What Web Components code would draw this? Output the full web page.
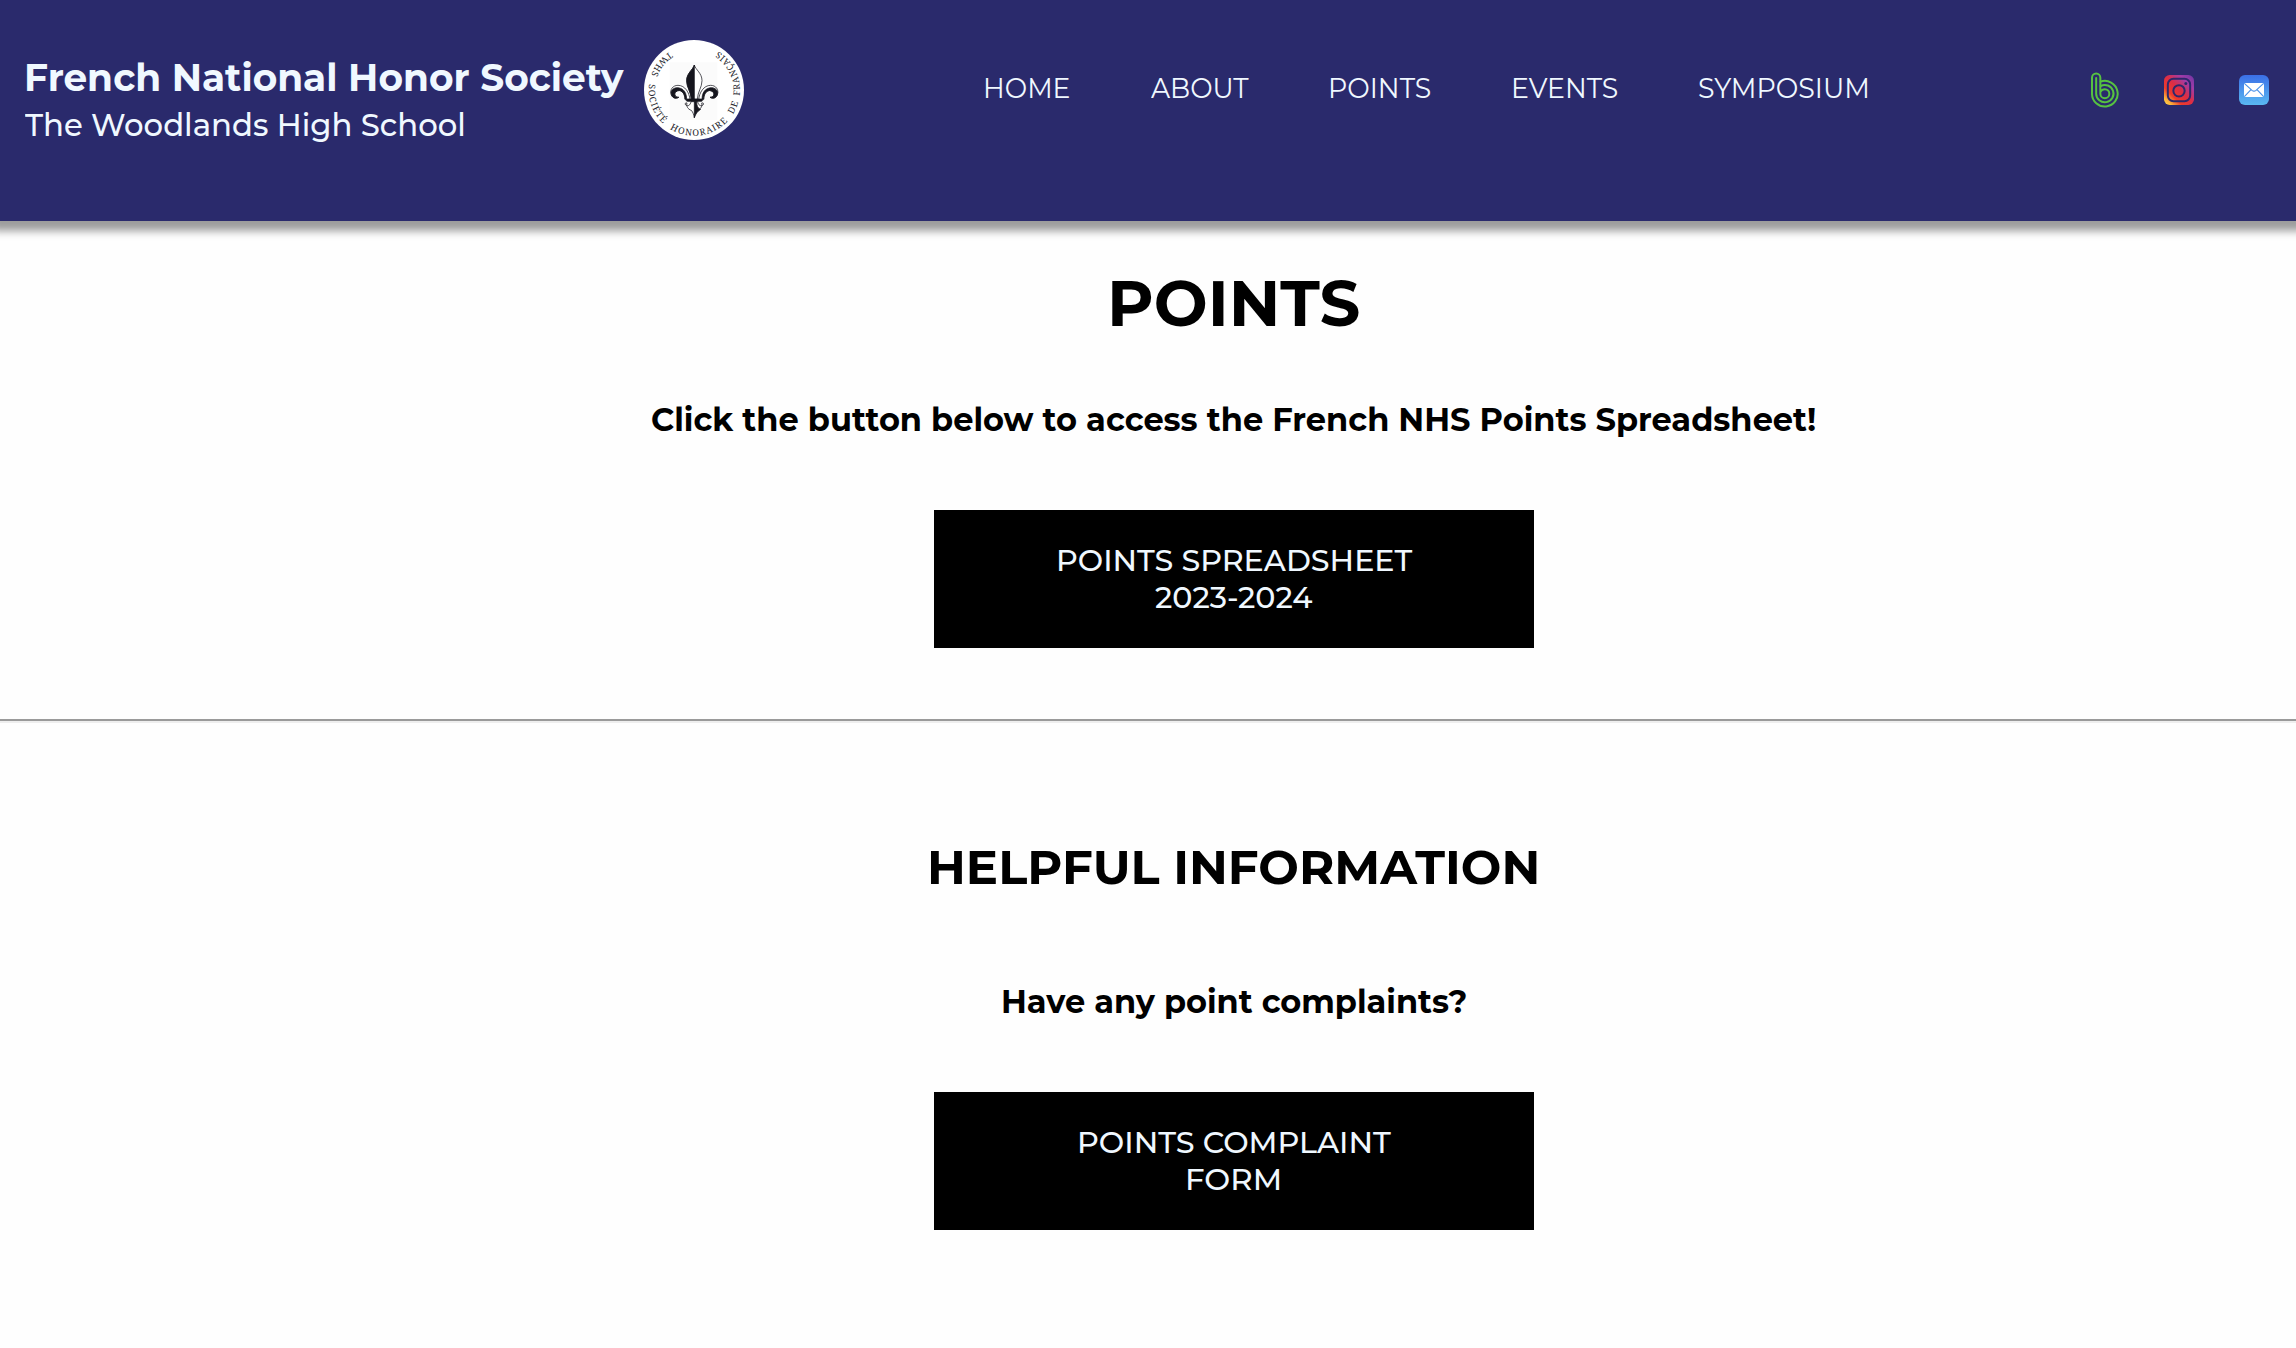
<!DOCTYPE html>
<html lang="en">
<head>
<meta charset="utf-8">
<title>Points</title>
<style>
html,body{margin:0;padding:0;background:#fefefe}
body{font-family:Montserrat,Inter,"Open Sans",sans-serif;color:#000;overflow:hidden;height:1348px}
</style>
</head>
<body>
<points-page></points-page>
<script>
// One line of text whose ink spans the given width. With the "ink" attribute the
// box hugs the ink; otherwise it keeps the font's side bearings.
class FitText extends HTMLElement {
  connectedCallback() {
    const w = +this.getAttribute('w'), size = +this.getAttribute('size');
    const lh = this.getAttribute('lh'), weight = this.getAttribute('weight') || 400;
    const c = document.createElement('canvas').getContext('2d');
    c.font = `${weight} ${size}px Montserrat, Inter, "Open Sans", sans-serif`;
    const m = c.measureText(this.textContent);
    const s = w / (m.actualBoundingBoxLeft + m.actualBoundingBoxRight);
    const ink = this.hasAttribute('ink');
    this.attachShadow({mode: 'open'}).innerHTML = `<style>:host{display:block;flex:none;width:${ink ? w : m.width * s}px;height:${lh}px;line-height:${lh}px;font-size:${size}px;font-weight:${weight};white-space:nowrap}
      span{display:inline-block;transform-origin:0 50%;transform:translateX(${ink ? m.actualBoundingBoxLeft * s : 0}px) scaleX(${s})}</style><span><slot></slot></span>`;
  }
}
customElements.define('fit-text', FitText);

function define(name, html) {
  const t = document.createElement('template');
  t.innerHTML = html;
  customElements.define(name, class extends HTMLElement {
    constructor() { super(); this.attachShadow({mode: 'open'}).append(t.content.cloneNode(true)); }
  });
}

define('society-seal', `<style>:host{display:block;flex:none;width:100px;height:100px}svg{display:block}</style>
<svg width="100" height="100" viewBox="30 29 300 300">
  <defs><path id="ring" d="M106.6 64.3A137 137 0 1 0 248.5 60.4"/></defs>
  <circle cx="180" cy="179" r="150" fill="#fff"/>
  <rect x="107" y="96" width="143" height="173" fill="#fbfbfb"/>
  <text font-family="'Noto Serif','Liberation Serif',serif" font-size="27" letter-spacing="3.2" fill="#25252c"><textPath href="#ring" startOffset="0">TWHS</textPath> <textPath href="#ring" startOffset="118">SOCIÉTÉ</textPath> <textPath href="#ring" startOffset="275">HONORAIRE</textPath> <textPath href="#ring" startOffset="490">DE</textPath> <textPath href="#ring" startOffset="550">FRANÇAIS</textPath></text>
  <g fill="none" stroke="#15151d" stroke-width="2.2" stroke-linejoin="round">
    <path fill="#fff" d="M181 104C185 119 204 128 204 151C204 171 191 184 190 207H172C171 184 158 171 158 151C158 128 177 119 181 104Z"/>
    <path fill="#15151d" d="M181 104V207H172C171 184 158 171 158 151C158 128 177 119 181 104Z"/>
    <path fill="#fff" d="M168 208C166 187 153 165 132 165C116 165 108 178 111 190C113 202 124 207 134 201C122 201 119 190 126 184C139 174 153 187 153 208Z"/>
    <path fill="#15151d" d="M147 178C130 166 112 174 111 187C112 202 124 207 134 201C122 201 119 190 126 184C139 174 153 187 153 206L158 207C158 192 153 183 147 178Z"/>
    <path fill="#fff" d="M194 208C196 187 209 165 230 165C246 165 254 178 251 190C249 202 238 207 228 201C240 201 243 190 236 184C223 174 209 187 209 208Z"/>
    <path fill="#15151d" d="M215 178C232 166 250 174 251 187C250 202 238 207 228 201C240 201 243 190 236 184C223 174 209 187 209 206L204 207C204 192 209 183 215 178Z"/>
    <path fill="#fff" d="M171 214C169 225 162 229 155 224C151 220 155 216 159 218C156 226 161 237 172 240C177 246 180 254 181 262C182 254 185 246 190 240C201 237 206 226 203 218C207 216 211 220 207 224C200 229 193 225 191 214Z"/>
    <path fill="#15151d" d="M181 214V262C185 250 192 242 200 237C191 234 188 225 188 214Z"/>
    <rect x="157" y="206" width="48" height="7" rx="3" fill="#15151d"/>
  </g>
</svg>`);

define('social-links', `<style>:host{display:block;flex:none}svg{display:block}</style>
<svg width="180" height="36" viewBox="60 36 540 108">
  <defs>
    <linearGradient id="mail" x1="0" y1="0" x2="0" y2="1"><stop offset="0" stop-color="#3b6fe6"/><stop offset="1" stop-color="#5ab9f2"/></linearGradient>
    <linearGradient id="ig" x1="0" y1="1" x2="1" y2="0"><stop offset="0" stop-color="#ffdc4e"/><stop offset=".13" stop-color="#fbb33c"/><stop offset=".3" stop-color="#ee3b2b"/><stop offset=".52" stop-color="#dc2d45"/><stop offset=".76" stop-color="#a13ca8"/><stop offset="1" stop-color="#6d35a4"/></linearGradient>
  </defs>
  <g fill="none" stroke="#56c241" stroke-width="6" stroke-linecap="round">
    <path d="M66 101V53A12.5 12.5 0 0 1 91 53V101A13.5 13.5 0 1 0 104.500 87.500C99 87.500 94 91 92 95"/>
    <path d="M66 101A38.500 38.500 0 1 0 92 64.700"/>
    <path d="M78.500 54V101A26 26 0 1 0 92 78"/>
  </g>
  <rect x="282" y="45" width="90" height="90" rx="17" fill="url(#ig)"/>
  <g fill="none" stroke="#2d286c" stroke-width="6"><rect x="293.500" y="56.500" width="67" height="67" rx="17"/><circle cx="327" cy="92.500" r="17"/></g>
  <circle cx="347.500" cy="70.500" r="4.500" fill="#2d286c"/>
  <rect x="507" y="45" width="90" height="90" rx="18" fill="url(#mail)"/>
  <rect x="522" y="69" width="60" height="42" rx="4" fill="#fff"/>
  <path d="M523 70L546 91Q552 96 558 91L581 70M523 110L543 89M581 110L561 89" fill="none" stroke="#4a91e8" stroke-width="3.500"/>
</svg>`);

define('site-header', `<style>
:host{display:flex;align-items:flex-start;position:relative;height:221px;box-sizing:border-box;background:#2a2a6c;color:aliceblue;box-shadow:0 2px 8px 8px #9d9d9d}
.brand{width:619px;padding:54px 0 0 25px;flex:none}
.brand fit-text:first-child{margin-left:2px}
.brand fit-text:last-child{margin-top:1px}
society-seal{margin-top:40px}
nav{display:flex;margin:69px 0 0 242px}
nav fit-text{margin-right:82px}
nav fit-text:first-child{margin-right:81.500px}
nav fit-text:nth-child(3){margin-right:83.700px}
nav fit-text:last-child{margin-right:0}
social-links{margin:72px 26px 0 auto}
</style>
<div class="brand"><fit-text ink w="597.500" size="38.4" lh="48" weight="700">French National Honor Society</fit-text><fit-text ink w="438" size="32" lh="44" weight="500">The Woodlands High School</fit-text></div>
<society-seal></society-seal>
<nav><fit-text ink w="83.300" size="27.2" lh="40">HOME</fit-text><fit-text ink w="98" size="27.2" lh="40">ABOUT</fit-text><fit-text ink w="99.500" size="27.2" lh="40">POINTS</fit-text><fit-text ink w="103.500" size="27.2" lh="40">EVENTS</fit-text><fit-text ink w="168" size="27.2" lh="40">SYMPOSIUM</fit-text></nav>
<social-links></social-links>`);

define('link-button', `<style>:host{display:flex;flex-direction:column;align-items:center;box-sizing:border-box;width:600px;height:138px;padding-top:32px;background:#000;color:aliceblue}</style><slot></slot>`);

define('info-section', `<style>:host{display:flex;flex-direction:column;align-items:center;padding-left:172px}
::slotted([slot=lead]){margin-top:var(--lead-gap)}
link-button{margin-top:70px}</style><slot name="title"></slot><slot name="lead"></slot><link-button><slot></slot></link-button>`);

define('points-page', `<style>:host{display:block}
.first{padding-top:42px;--lead-gap:57px}
.second{padding-top:114px;--lead-gap:85px}
hr{margin:71px 0 0;border:0;height:2px;background:#9a9a9a;border-bottom:2px solid #eee}
</style>
<site-header></site-header>
<main>
<info-section class="first"><fit-text slot="title" w="247.500" size="64" lh="80" weight="700">POINTS</fit-text><fit-text slot="lead" w="1163" size="32" lh="40" weight="700">Click the button below to access the French NHS Points Spreadsheet!</fit-text><fit-text w="353.500" size="30.4" lh="37" weight="500">POINTS SPREADSHEET</fit-text><fit-text w="157" size="30.4" lh="37" weight="500">2023-2024</fit-text></info-section>
<hr>
<info-section class="second"><fit-text slot="title" w="606.500" size="48" lh="60" weight="700">HELPFUL INFORMATION</fit-text><fit-text slot="lead" w="463.500" size="32" lh="40" weight="700">Have any point complaints?</fit-text><fit-text w="311" size="30.4" lh="37" weight="500">POINTS COMPLAINT</fit-text><fit-text w="91" size="30.4" lh="37" weight="500">FORM</fit-text></info-section>
</main>`);
</script>
</body>
</html>
